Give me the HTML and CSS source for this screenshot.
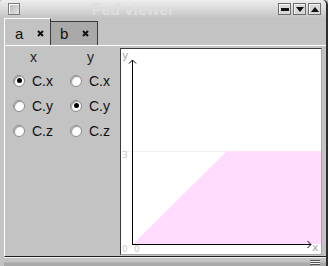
FILE: index.html
```html
<!DOCTYPE html>
<html>
<head>
<meta charset="utf-8">
<link rel="stylesheet" href="styles.css">
</head>
<body>
<div class="window">
  <div class="titlebar">
    <span class="winicon"></span>
    <span class="title">Fed viewer</span>
    <span class="wbtns">
      <span class="wbtn"><svg width="10" height="9" viewBox="0 0 10 9"><rect x="1" y="3" width="8" height="3" fill="#111"/></svg></span>
      <span class="wbtn"><svg width="10" height="9" viewBox="0 0 10 9"><polygon points="1,2 9,2 5,7" fill="#111"/></svg></span>
      <span class="wbtn"><svg width="10" height="9" viewBox="0 0 10 9"><polygon points="1,7 9,7 5,2" fill="#111"/></svg></span>
    </span>
  </div>
  <div class="tabs">
    <div class="tab active">
      <span class="tlabel">a</span>
      <svg class="tclose" width="7" height="7" viewBox="0 0 7 7"><path d="M1 1L6 6M6 1L1 6" stroke="#111" stroke-width="2"/></svg>
    </div>
    <div class="tab">
      <span class="tlabel">b</span>
      <svg class="tclose" width="7" height="7" viewBox="0 0 7 7"><path d="M1 1L6 6M6 1L1 6" stroke="#111" stroke-width="2"/></svg>
    </div>
  </div>
  <div class="panel">
    <div class="choices">
      <div class="hdr">x</div>
      <div class="hdr">y</div>
      <div class="opt"><span class="radio on"></span>C.x</div>
      <div class="opt"><span class="radio"></span>C.x</div>
      <div class="opt"><span class="radio"></span>C.y</div>
      <div class="opt"><span class="radio on"></span>C.y</div>
      <div class="opt"><span class="radio"></span>C.z</div>
      <div class="opt"><span class="radio"></span>C.z</div>
    </div>
    <div class="plot">
      <svg width="200" height="205" viewBox="121 49 200 205">
        <rect x="121" y="49" width="200" height="205" fill="#fff"/>
        <line x1="122" y1="151.5" x2="321" y2="151.5" stroke="#f0eef0" stroke-width="1"/>
        <polygon points="133,244 227,151 321,151 321,244" fill="#ffdbfe"/>
        <line x1="132.5" y1="60" x2="132.5" y2="244" stroke="#000" stroke-width="1"/>
        <line x1="132" y1="244.5" x2="311" y2="244.5" stroke="#000" stroke-width="1"/>
        <path d="M129 63.5L132.5 60L136 63.5" fill="none" stroke="#000" stroke-width="1"/>
        <path d="M307.5 241L311 244.5L307.5 248" fill="none" stroke="#000" stroke-width="1"/>
        <text x="122" y="59" class="lbl big">y</text>
        <text x="312" y="251" class="lbl big">x</text>
        <text x="122" y="158" class="lbl">3</text>
        <text x="122" y="252" class="lbl">0</text>
        <text x="134" y="252" class="lbl">0</text>
      </svg>
    </div>
  </div>
  <div class="bottom">
    <span class="grip"></span>
  </div>
</div>
</body>
</html>
```

FILE: styles.css
```css
html, body {
  margin: 0;
  padding: 0;
  width: 328px;
  height: 266px;
  overflow: hidden;
  background: #c3c3c3;
}

.window {
  width: 328px;
  height: 266px;
  box-sizing: border-box;
  border-right: 2px solid #2e2e2e;
  border-top-right-radius: 5px;
  background: #c3c3c3;
  font-family: "Liberation Sans", Arial, sans-serif;
  color: #111;
  display: flex;
  flex-direction: column;
}

.titlebar {
  height: 18px;
  flex: none;
  display: flex;
  align-items: flex-start;
  background: linear-gradient(#eeeeee, #d6d6d6 60%, #c3c3c3);
  border-top-left-radius: 3px;
  border-top-right-radius: 5px;
}

.winicon {
  width: 10px;
  height: 10px;
  margin: 3px 0 0 8px;
  border: 1px solid #7c7c7c;
  background: linear-gradient(135deg, #b8b8b8, #e4e4e4);
  box-shadow: inset 1px 1px 0 #fff;
}

.title {
  flex: 1;
  text-align: center;
  font-weight: bold;
  font-size: 16px;
  line-height: 19px;
  color: #dedede;
  padding-right: 32px;
}

.wbtns {
  display: flex;
  gap: 2px;
  margin: 3px 5px 0 0;
}

.wbtn {
  width: 13px;
  height: 12px;
  box-sizing: border-box;
  border: 1px solid #6e6e6e;
  background: #d8d8d8;
  box-shadow: inset 1px 1px 0 #f4f4f4;
  display: flex;
  align-items: center;
  justify-content: center;
}

.wbtn svg { display: block; }

.tabs {
  height: 27px;
  flex: none;
  display: flex;
  align-items: flex-end;
  padding-left: 4px;
}

.tab {
  width: 47px;
  height: 24px;
  box-sizing: border-box;
  background: #a9a9a9;
  border-top: 1px solid #3c3c3c;
  border-right: 1px solid #3c3c3c;
  display: flex;
  align-items: center;
  padding-left: 9px;
}

.tab.active {
  height: 27px;
  background: #c3c3c3;
  border-top: 1px solid #ffffff;
  border-left: 1px solid #ffffff;
  border-right: 1px solid #3c3c3c;
  padding-left: 10px;
  padding-top: 3px;
}

.tlabel {
  font-size: 15px;
  width: 22px;
}

.tclose { display: block; }

.panel {
  flex: none;
  height: 212px;
  margin-left: 4px;
  box-sizing: border-box;
  border-top: 1px solid #ffffff;
  border-left: 1px solid #ffffff;
  border-bottom: 1px solid #1e1e1e;
  display: flex;
}

.choices {
  width: 115px;
  flex: none;
  display: grid;
  grid-template-columns: 57px 50px;
  grid-template-rows: 22px 25px 25px 25px;
  padding-left: 8px;
  box-sizing: border-box;
  align-content: start;
}

.hdr {
  font-size: 14px;
  line-height: 22px;
  padding-left: 17px;
  color: #222;
}

.opt {
  display: flex;
  align-items: center;
  font-size: 14px;
  color: #111;
}

.radio {
  width: 12px;
  height: 12px;
  box-sizing: border-box;
  border-radius: 50%;
  background: #fff;
  border: 1px solid #8a8a8a;
  box-shadow: inset 1px 1px 1px #9a9a9a;
  margin-right: 7px;
  position: relative;
}

.radio.on::after {
  content: "";
  position: absolute;
  left: 2.5px;
  top: 2.5px;
  width: 5px;
  height: 5px;
  border-radius: 50%;
  background: #000;
}

.plot {
  margin-top: 2px;
  width: 202px;
  height: 207px;
  box-sizing: border-box;
  border-top: 1px solid #3a3a3a;
  border-left: 1px solid #3a3a3a;
  border-right: 1px solid #a6a6a6;
  border-bottom: 1px solid #a6a6a6;
  background: #fff;
}

.plot svg { display: block; }

.lbl {
  font-family: "DejaVu Sans", sans-serif;
  font-size: 9px;
  fill: #cbc8cb;
}

.lbl.big {
  font-size: 11px;
  fill: #a8a8a8;
}

.bottom {
  flex: 1;
  display: flex;
  justify-content: flex-end;
  align-items: flex-start;
  border-top: 1px solid #f2f2f2;
  background: linear-gradient(#c3c3c3 0, #c3c3c3 4px, #a9a9a9 5px);
  margin-left: 4px;
}

.grip {
  width: 10px;
  height: 5px;
  margin: 2px 6px 0 0;
  background: repeating-linear-gradient(#555 0 1px, #f0f0f0 1px 2px);
}
```
